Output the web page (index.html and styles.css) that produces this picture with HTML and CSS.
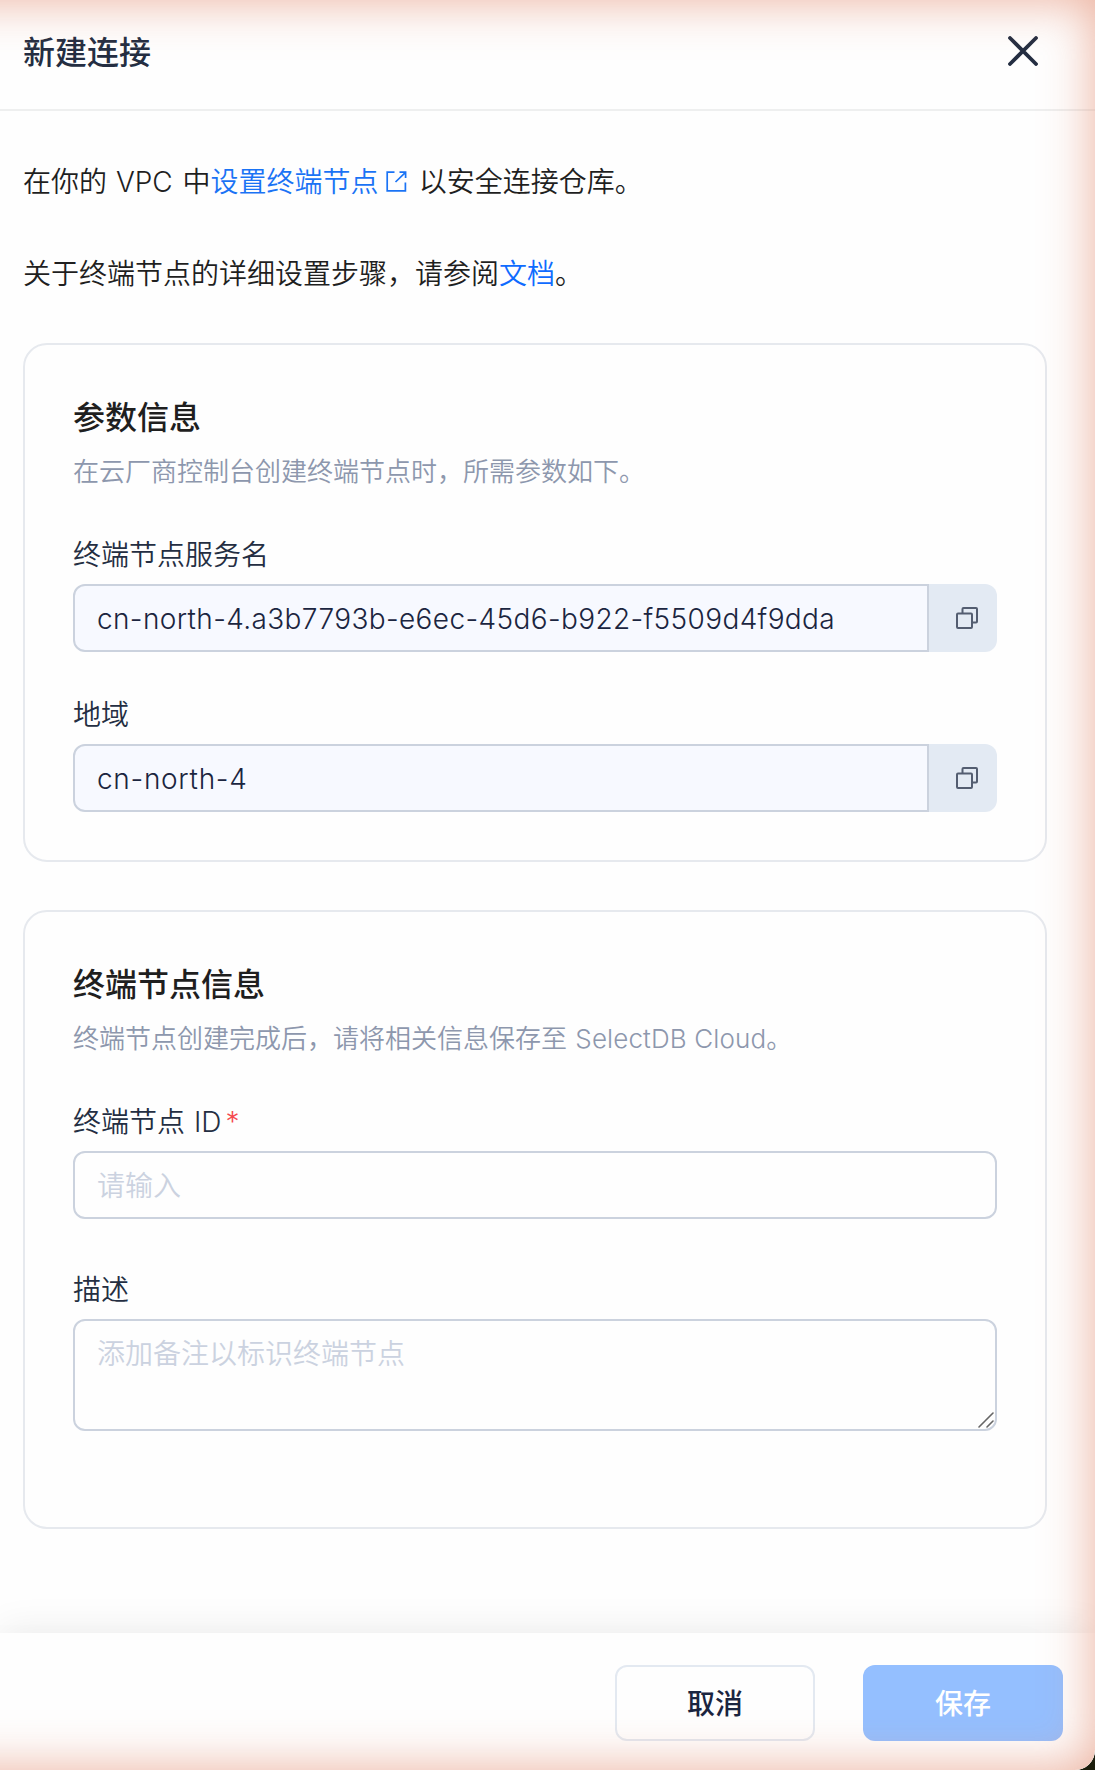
FILE: index.html
```html
<!DOCTYPE html>
<html lang="zh-CN">
<head>
    <meta charset="UTF-8">
    <meta name="viewport" content="width=device-width, initial-scale=1.0">
    <title>新建连接</title>
    <link rel="stylesheet" href="styles.css">
</head>
<body>
    <div class="drawer">
        <header class="drawer-header">
            <h2 class="drawer-title">新建连接</h2>
            <button class="close-btn" aria-label="关闭">
                <svg width="30" height="30" viewBox="0 0 30 30" fill="none" stroke="currentColor" stroke-width="3.8" stroke-linecap="round">
                    <path d="M2 2L28 28M28 2L2 28"/>
                </svg>
            </button>
        </header>

        <main class="drawer-body">
            <p class="intro">在你的 <span class="vpc">VPC</span> 中<a class="link" href="#">设置终端节点<svg class="external-icon" width="21" height="21" viewBox="0 0 21 21" fill="none" stroke="currentColor" stroke-width="1.7"><path d="M8.5 1.2H1.2V19.8H19.4V11.5M9.5 11L19 1.8M13.5 1.2H19.6V7"/></svg></a>以安全连接仓库。</p>
            <p class="intro">关于终端节点的详细设置步骤，请参阅<a class="link link-doc" href="#">文档</a>。</p>

            <section class="card">
                <h3 class="card-title">参数信息</h3>
                <p class="card-desc">在云厂商控制台创建终端节点时，所需参数如下。</p>

                <label class="label" for="serviceName">终端节点服务名</label>
                <div class="copy-field">
                    <input id="serviceName" class="input service-name" type="text" value="cn-north-4.a3b7793b-e6ec-45d6-b922-f5509d4f9dda" readonly>
                    <button class="copy-btn" aria-label="复制">
                        <svg width="22" height="22" viewBox="0 0 22 22" fill="none" stroke="currentColor" stroke-width="2" stroke-linejoin="round">
                            <rect x="1" y="6.5" width="15" height="14.5" rx="1"/>
                            <path d="M6.5 6.5V2A1 1 0 0 1 7.5 1H20A1 1 0 0 1 21 2V14.5A1 1 0 0 1 20 15.5H16"/>
                        </svg>
                    </button>
                </div>

                <label class="label" for="region">地域</label>
                <div class="copy-field">
                    <input id="region" class="input region" type="text" value="cn-north-4" readonly>
                    <button class="copy-btn" aria-label="复制">
                        <svg width="22" height="22" viewBox="0 0 22 22" fill="none" stroke="currentColor" stroke-width="2" stroke-linejoin="round">
                            <rect x="1" y="6.5" width="15" height="14.5" rx="1"/>
                            <path d="M6.5 6.5V2A1 1 0 0 1 7.5 1H20A1 1 0 0 1 21 2V14.5A1 1 0 0 1 20 15.5H16"/>
                        </svg>
                    </button>
                </div>
            </section>

            <section class="card endpoint-card">
                <h3 class="card-title">终端节点信息</h3>
                <p class="card-desc">终端节点创建完成后，请将相关信息保存至 <span class="product">SelectDB Cloud</span>。</p>

                <label class="label" for="endpointId">终端节点 <span class="id-text">ID</span><span class="required">*</span></label>
                <input id="endpointId" class="input" type="text" placeholder="请输入">

                <label class="label desc-label" for="description">描述</label>
                <div class="textarea-wrap">
                    <textarea id="description" class="input textarea" placeholder="添加备注以标识终端节点"></textarea>
                    <svg class="resize-handle" width="16" height="16" viewBox="0 0 16 16" stroke="#666" stroke-width="1.6" stroke-linecap="round">
                        <path d="M1 15L15 1M9 15L15 9"/>
                    </svg>
                </div>
            </section>
        </main>

        <footer class="drawer-footer">
            <button class="btn">取消</button>
            <button class="btn btn-primary">保存</button>
        </footer>
        <div class="glow"></div>
    </div>
</body>
</html>
```
FILE: styles.css
```css
* {
    box-sizing: border-box;
}

body {
    margin: 0;
    background: #1c1d0c;
    color: #1f1f1f;
    font-family: Inter, "Noto Sans CJK SC", sans-serif;
    font-size: 28px;
    font-weight: 350;
}

h2,
h3,
p {
    margin: 0;
}

button,
input,
textarea {
    font: inherit;
}

.drawer {
    position: relative;
    display: flex;
    flex-direction: column;
    height: 1770px;
    overflow: hidden;
    background: #fefefe;
    border-radius: 0 0 20px 0;
}

.drawer-header {
    display: flex;
    align-items: center;
    justify-content: space-between;
    height: 111px;
    padding: 0 57px 7px 23px;
    border-bottom: 2px solid #eeefef;
    color: #242e42;
}

.drawer-title {
    padding-top: 4px;
    font-size: 32px;
    font-weight: 500;
    line-height: 48px;
}

.close-btn {
    display: flex;
    padding: 0;
    border: none;
    background: none;
    color: #242e42;
}

.drawer-body {
    flex: 1;
    padding: 50px 48px 0 23px;
}

.intro {
    height: 42px;
    margin-bottom: 50px;
    line-height: 42px;
    white-space: nowrap;
}

.intro + .card {
    margin-top: -2px;
}

.vpc {
    margin: 0 2px 0 1px;
}

.link {
    color: #1a73f5;
    text-decoration: none;
}

.link-doc {
    color: #0f6bff;
}

.external-icon {
    margin: 0 12px 0 7px;
    vertical-align: 0;
}

.card {
    margin-bottom: 48px;
    padding: 49px 48px 48px;
    border: 2px solid #e6e9ee;
    border-radius: 24px;
}

.endpoint-card {
    padding-bottom: 96px;
}

.card-title {
    font-size: 32px;
    font-weight: 500;
    line-height: 48px;
}

.card-desc {
    margin: 10px 0 43px;
    color: #8d97ad;
    font-size: 26px;
    line-height: 40px;
}

.label {
    display: block;
    margin-bottom: 9px;
    color: #242e42;
    line-height: 40px;
}

.copy-field {
    display: flex;
    height: 68px;
}

.copy-field + .label {
    margin-top: 43px;
}

.desc-label {
    margin-top: 51px;
}

.input {
    display: block;
    width: 100%;
    height: 68px;
    padding: 1px 22px 0;
    border: 2px solid #cbd2de;
    border-radius: 12px;
    outline: none;
    background: transparent;
    color: #1b2540;
}

.input::placeholder {
    color: #cbd2e0;
    opacity: 1;
}

.copy-field .input {
    flex: 1;
    border-radius: 12px 0 0 12px;
    background: #f7f9ff;
}

.copy-field .service-name {
    letter-spacing: 0.37px;
}

.copy-field .region {
    letter-spacing: 0.7px;
}

.copy-btn {
    display: flex;
    align-items: center;
    justify-content: flex-end;
    width: 68px;
    padding: 0 19px 0 0;
    border: none;
    border-radius: 0 12px 12px 0;
    background: #e3eaf3;
    color: #535d70;
}

.product {
    margin-left: 1px;
    letter-spacing: 0.12px;
}

.id-text {
    margin-left: 1px;
}

.required {
    margin-left: 4px;
    color: #f5484d;
}

.textarea-wrap {
    position: relative;
}

.textarea {
    height: 112px;
    padding-top: 13px;
    line-height: 40px;
    resize: none;
}

.resize-handle {
    position: absolute;
    right: 3px;
    bottom: 3px;
}

.drawer-footer {
    display: flex;
    justify-content: flex-end;
    gap: 48px;
    height: 137px;
    padding: 32px 32px 0;
    background: #fefefe;
    box-shadow: 0 -4px 36px rgba(0, 0, 0, 0.07), -40px -4px 36px -4px rgba(0, 0, 0, 0.01);
}

.btn {
    width: 200px;
    height: 76px;
    padding: 0 0 2px;
    border: 2px solid #e3e9f1;
    border-radius: 12px;
    background: transparent;
    color: #1b2540;
    font-weight: 500;
}

.btn-primary {
    border: none;
    background: #94bfff;
    color: #fff;
}

/* warm light along the top, right and bottom edges */
.glow {
    position: absolute;
    inset: 0 0 0 -80px;
    border-radius: 0 0 20px 0;
    box-shadow: inset 0 0 50px rgba(226, 130, 98, 0.64);
    pointer-events: none;
}
```
